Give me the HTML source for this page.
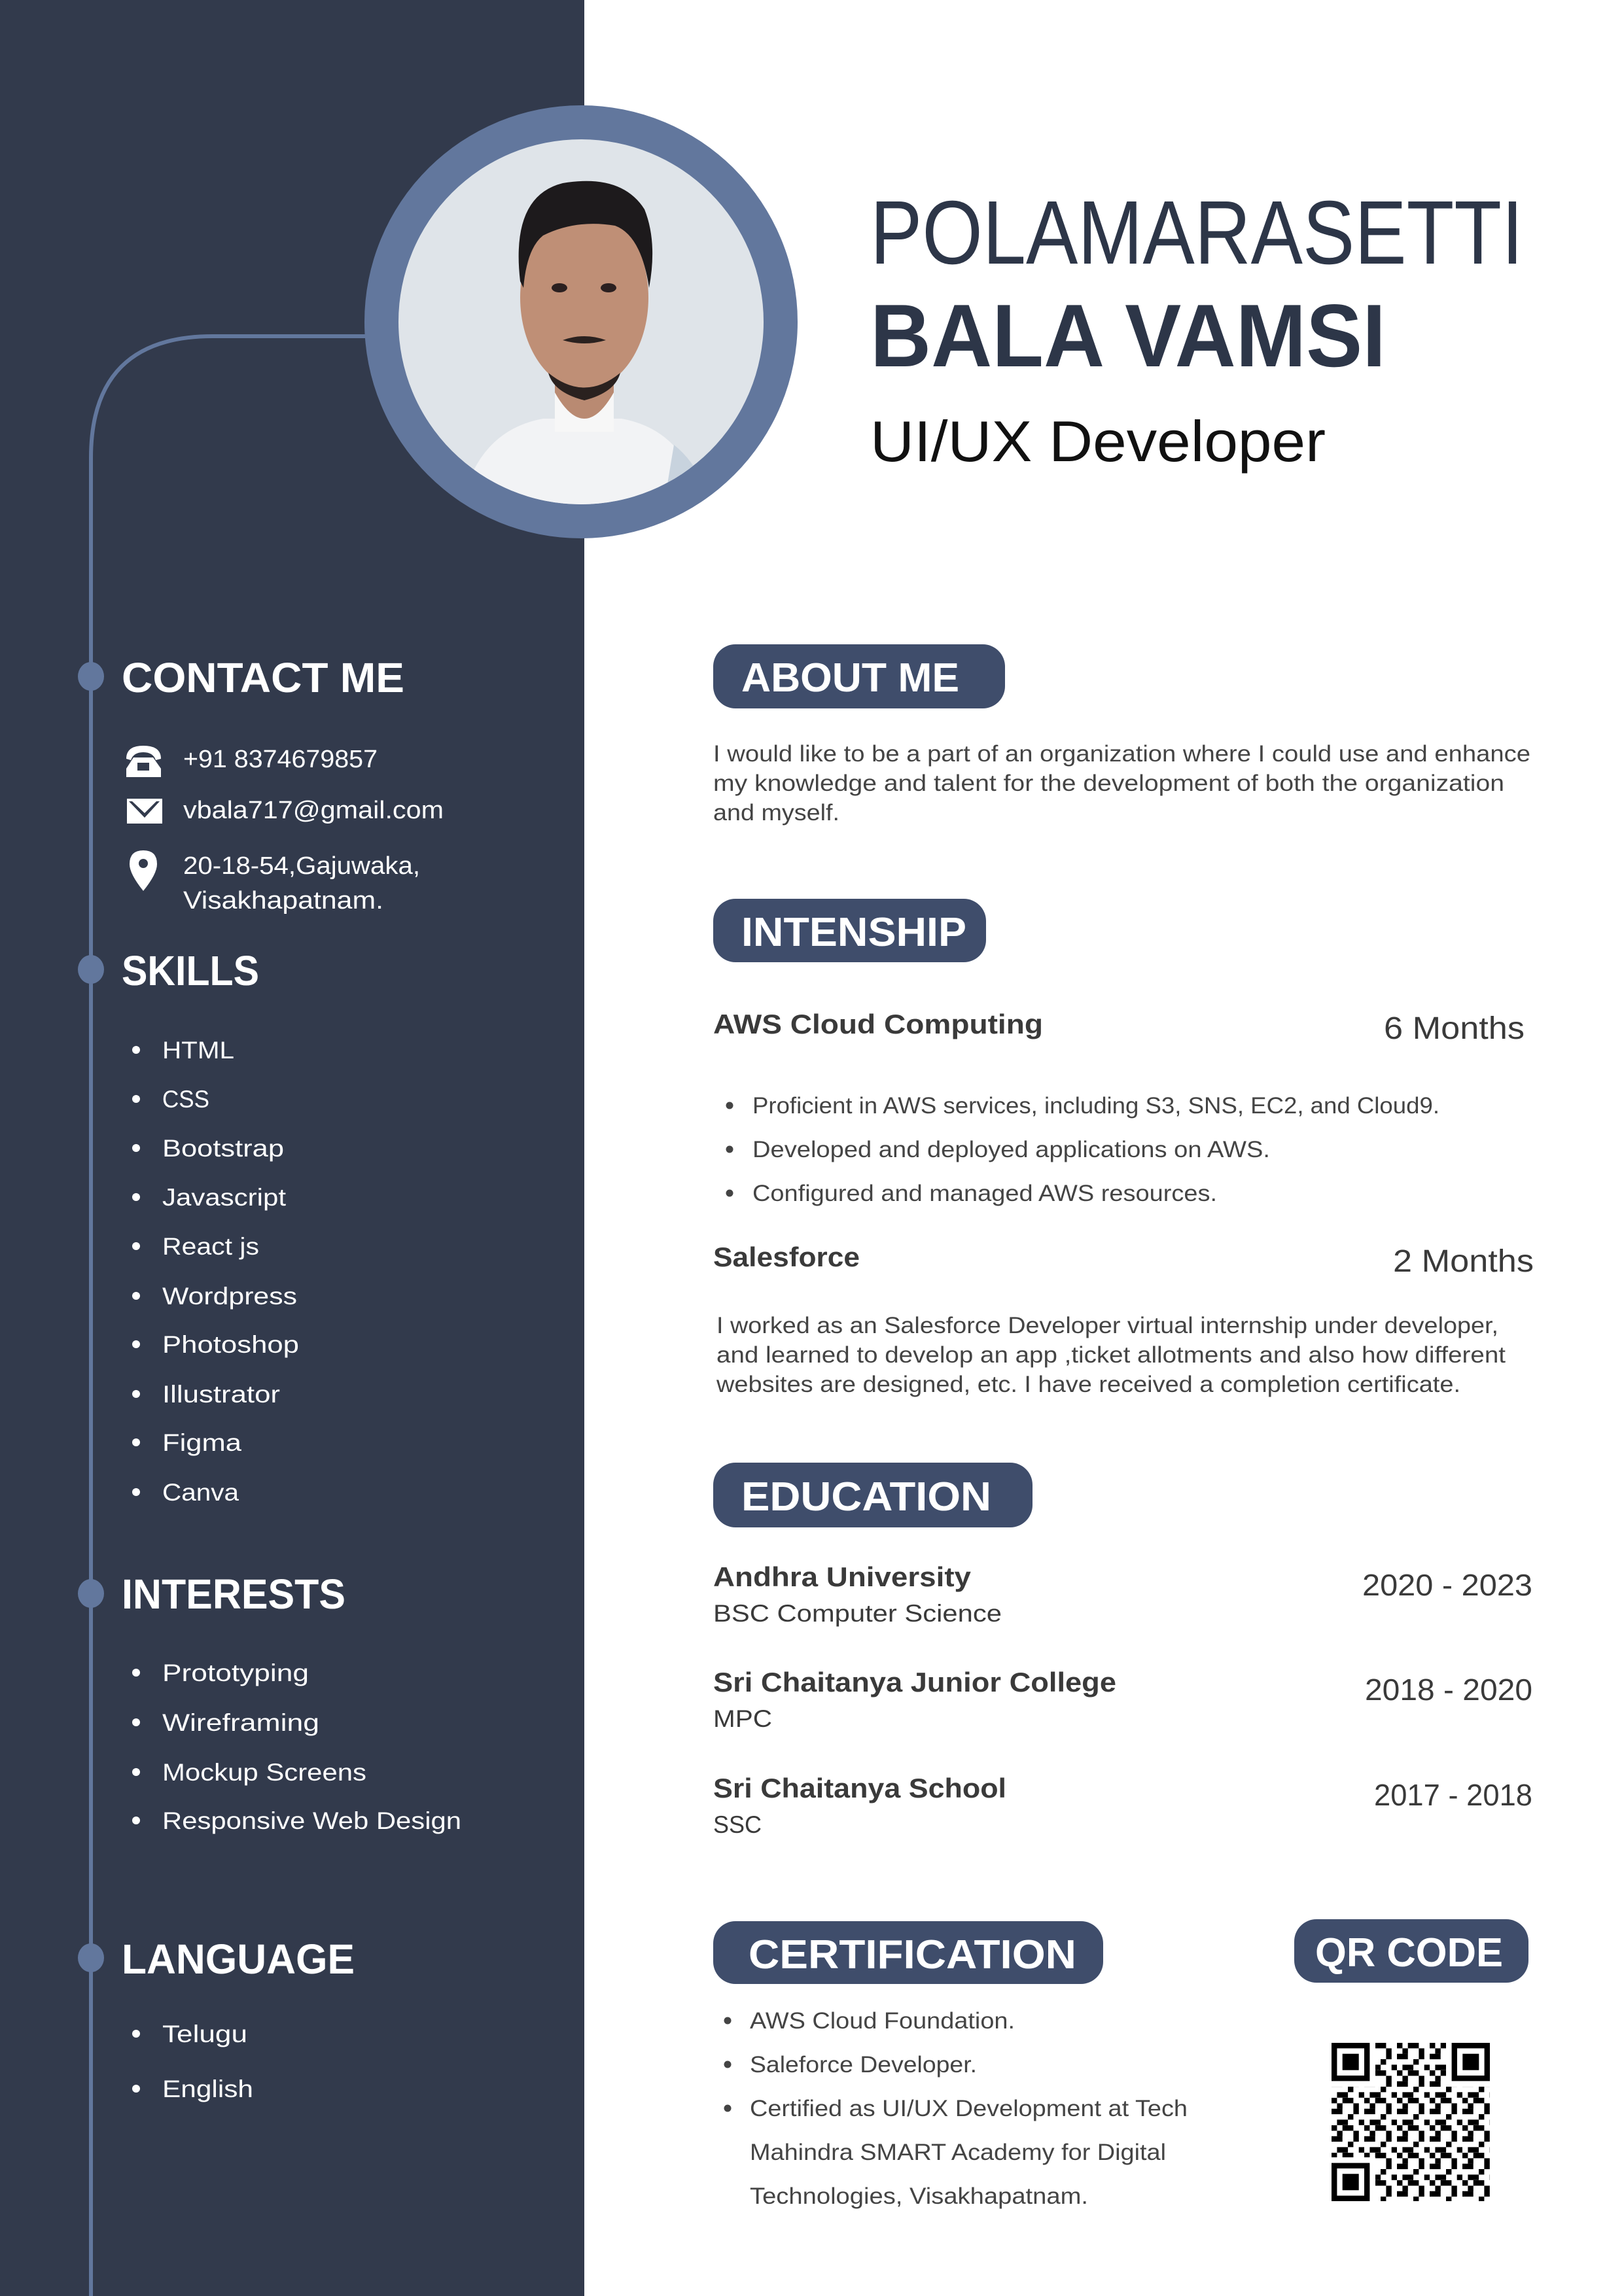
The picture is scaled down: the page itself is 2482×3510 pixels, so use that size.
<!DOCTYPE html>
<html><head><meta charset="utf-8">
<style>
html,body{margin:0;padding:0;background:#fff;}
svg{display:block;}
text{font-family:"Liberation Sans",sans-serif;}
</style></head>
<body>
<svg width="2482" height="3510" viewBox="0 0 2482 3510" xmlns="http://www.w3.org/2000/svg">
<defs>
<clipPath id="ph"><circle cx="888" cy="492" r="279"/></clipPath>
<pattern id="qrp" x="2035" y="3123" width="50" height="42" patternUnits="userSpaceOnUse">
<rect x="0" y="0" width="8.4" height="8.4" fill="#000"/><rect x="16.7" y="0" width="16.7" height="8.4" fill="#000"/>
<rect x="8.4" y="8.4" width="8.4" height="8.4" fill="#000"/><rect x="33.4" y="8.4" width="8.4" height="16.7" fill="#000"/>
<rect x="0" y="16.7" width="16.7" height="8.4" fill="#000"/><rect x="25" y="25" width="8.4" height="8.4" fill="#000"/>
<rect x="8.4" y="33.4" width="16.7" height="8.4" fill="#000"/><rect x="41.7" y="33.4" width="8.4" height="8.4" fill="#000"/>
</pattern>
</defs>
<rect width="2482" height="3510" fill="#fff"/>
<rect width="893" height="3510" fill="#323a4c"/>
<!-- timeline -->
<path d="M139 3510 V700 Q139 514 325 514 H570" fill="none" stroke="#62779d" stroke-width="6"/>
<g fill="#62779d">
<ellipse cx="139" cy="1034" rx="20" ry="22"/>
<ellipse cx="139" cy="1482" rx="20" ry="22"/>
<ellipse cx="139" cy="2436" rx="20" ry="22"/>
<ellipse cx="139" cy="2993" rx="20" ry="22"/>
</g>
<!-- photo -->
<circle cx="888" cy="492" r="331" fill="#62779d"/>
<circle cx="888" cy="492" r="279" fill="#dfe4e9"/>
<g clip-path="url(#ph)">
<path d="M700 800 Q720 660 830 640 L950 640 Q1060 660 1080 800 Z" fill="#f2f3f5"/>
<path d="M1030 680 Q1080 720 1090 800 L1010 800 Z" fill="#c8d3de"/>
<rect x="848" y="560" width="90" height="90" fill="#b98a72"/>
<path d="M848 600 Q893 680 938 600 L938 660 L848 660 Z" fill="#f7f7f7"/>
<ellipse cx="893" cy="455" rx="98" ry="140" fill="#bf8f76"/>
<path d="M795 430 Q780 300 860 280 Q950 265 985 320 Q1005 370 992 440 Q980 360 940 345 Q880 335 830 360 Q805 380 800 440 Z" fill="#1d1a1c"/>
<path d="M838 570 Q893 615 948 570 Q940 600 893 612 Q846 600 838 570 Z" fill="#2a211f"/>
<path d="M860 520 Q893 508 926 520 Q893 530 860 520 Z" fill="#2a211f"/>
<ellipse cx="855" cy="440" rx="12" ry="7" fill="#2b2020"/>
<ellipse cx="930" cy="440" rx="12" ry="7" fill="#2b2020"/>
</g>
<!-- name -->
<text x="1330" y="403" font-size="138" fill="#2d3648" textLength="998" lengthAdjust="spacingAndGlyphs">POLAMARASETTI</text>
<text x="1330" y="560" font-size="136" font-weight="bold" fill="#2d3648" textLength="788" lengthAdjust="spacingAndGlyphs">BALA VAMSI</text>
<text x="1330" y="705" font-size="88" fill="#111" textLength="696" lengthAdjust="spacingAndGlyphs">UI/UX Developer</text>
<!-- sidebar headings -->
<g fill="#fff" font-weight="bold" font-size="64">
<text x="186" y="1058" textLength="432" lengthAdjust="spacingAndGlyphs">CONTACT ME</text>
<text x="186" y="1506" textLength="210" lengthAdjust="spacingAndGlyphs">SKILLS</text>
<text x="186" y="2459" textLength="342" lengthAdjust="spacingAndGlyphs">INTERESTS</text>
<text x="186" y="3017" textLength="356" lengthAdjust="spacingAndGlyphs">LANGUAGE</text>
</g>
<!-- contact icons -->
<g fill="#fff">
<path d="M193 1160 Q193 1140 219 1140 Q246 1140 246 1160 L238 1162 Q234 1150 219 1150 Q204 1150 200 1162 Z"/>
<path d="M204 1158 L234 1158 L246 1175 L246 1188 L193 1188 L193 1175 Z"/>
<rect x="194" y="1221" width="54" height="38"/>
<path d="M219 1300 Q198 1300 198 1321 Q198 1336 219 1362 Q240 1336 240 1321 Q240 1300 219 1300 Z"/>
</g>
<g fill="#323a4c">
<rect x="210" y="1166" width="18" height="12"/>
<path d="M197 1225 L221 1250 L244 1225 L239 1225 L221 1243 L202 1225 Z"/>
<circle cx="219" cy="1320" r="7"/>
</g>
<g fill="#fff" font-size="38">
<text x="280" y="1173" textLength="297" lengthAdjust="spacingAndGlyphs">+91 8374679857</text>
<text x="280" y="1251" textLength="398" lengthAdjust="spacingAndGlyphs">vbala717@gmail.com</text>
<text x="280" y="1336" textLength="362" lengthAdjust="spacingAndGlyphs">20-18-54,Gajuwaka,</text>
<text x="280" y="1389" textLength="306" lengthAdjust="spacingAndGlyphs">Visakhapatnam.</text>
</g>
<!-- skills -->
<g fill="#fff" font-size="37">
<g>
<circle cx="208" cy="1605" r="6"/><text x="248" y="1618" textLength="110" lengthAdjust="spacingAndGlyphs">HTML</text>
<circle cx="208" cy="1680" r="6"/><text x="248" y="1693" textLength="72" lengthAdjust="spacingAndGlyphs">CSS</text>
<circle cx="208" cy="1755" r="6"/><text x="248" y="1768" textLength="186" lengthAdjust="spacingAndGlyphs">Bootstrap</text>
<circle cx="208" cy="1830" r="6"/><text x="248" y="1843" textLength="189" lengthAdjust="spacingAndGlyphs">Javascript</text>
<circle cx="208" cy="1905" r="6"/><text x="248" y="1918" textLength="148" lengthAdjust="spacingAndGlyphs">React js</text>
<circle cx="208" cy="1981" r="6"/><text x="248" y="1994" textLength="206" lengthAdjust="spacingAndGlyphs">Wordpress</text>
<circle cx="208" cy="2055" r="6"/><text x="248" y="2068" textLength="209" lengthAdjust="spacingAndGlyphs">Photoshop</text>
<circle cx="208" cy="2131" r="6"/><text x="248" y="2144" textLength="180" lengthAdjust="spacingAndGlyphs">Illustrator</text>
<circle cx="208" cy="2205" r="6"/><text x="248" y="2218" textLength="121" lengthAdjust="spacingAndGlyphs">Figma</text>
<circle cx="208" cy="2281" r="6"/><text x="248" y="2294" textLength="117" lengthAdjust="spacingAndGlyphs">Canva</text>
</g>
<circle cx="208" cy="2557" r="6"/><text x="248" y="2570" textLength="224" lengthAdjust="spacingAndGlyphs">Prototyping</text>
<circle cx="208" cy="2633" r="6"/><text x="248" y="2646" textLength="240" lengthAdjust="spacingAndGlyphs">Wireframing</text>
<circle cx="208" cy="2709" r="6"/><text x="248" y="2722" textLength="312" lengthAdjust="spacingAndGlyphs">Mockup Screens</text>
<circle cx="208" cy="2783" r="6"/><text x="248" y="2796" textLength="457" lengthAdjust="spacingAndGlyphs">Responsive Web Design</text>
<circle cx="208" cy="3109" r="6"/><text x="248" y="3122" textLength="130" lengthAdjust="spacingAndGlyphs">Telugu</text>
<circle cx="208" cy="3193" r="6"/><text x="248" y="3206" textLength="139" lengthAdjust="spacingAndGlyphs">English</text>
</g>
<!-- pills -->
<g fill="#3f4d6b">
<rect x="1090" y="985" width="446" height="98" rx="34"/>
<rect x="1090" y="1374" width="417" height="97" rx="34"/>
<rect x="1090" y="2236" width="488" height="99" rx="34"/>
<rect x="1090" y="2937" width="596" height="96" rx="34"/>
<rect x="1978" y="2934" width="358" height="97" rx="34"/>
</g>
<g fill="#fff" font-weight="bold" font-size="62">
<text x="1133" y="1057" textLength="333" lengthAdjust="spacingAndGlyphs">ABOUT ME</text>
<text x="1133" y="1446" textLength="344" lengthAdjust="spacingAndGlyphs">INTENSHIP</text>
<text x="1133" y="2309" textLength="382" lengthAdjust="spacingAndGlyphs">EDUCATION</text>
<text x="1144" y="3009" textLength="501" lengthAdjust="spacingAndGlyphs">CERTIFICATION</text>
<text x="2010" y="3006" textLength="287" lengthAdjust="spacingAndGlyphs">QR CODE</text>
</g>
<!-- about -->
<g fill="#444" font-size="35">
<text x="1090" y="1164" textLength="1249" lengthAdjust="spacingAndGlyphs">I would like to be a part of an organization where I could use and enhance</text>
<text x="1090" y="1209" textLength="1209" lengthAdjust="spacingAndGlyphs">my knowledge and talent for the development of both the organization</text>
<text x="1090" y="1254" textLength="193" lengthAdjust="spacingAndGlyphs">and myself.</text>
</g>
<!-- internship -->
<g fill="#3a3a3a">
<text x="1090" y="1580" font-size="42" font-weight="bold" textLength="504" lengthAdjust="spacingAndGlyphs">AWS Cloud Computing</text>
<text x="2115" y="1588" font-size="48" textLength="215" lengthAdjust="spacingAndGlyphs">6 Months</text>
<text x="1090" y="1936" font-size="42" font-weight="bold" textLength="224" lengthAdjust="spacingAndGlyphs">Salesforce</text>
<text x="2129" y="1944" font-size="48" textLength="215" lengthAdjust="spacingAndGlyphs">2 Months</text>
</g>
<g fill="#444" font-size="35">
<circle cx="1115" cy="1690" r="5.5"/><text x="1150" y="1702" textLength="1050" lengthAdjust="spacingAndGlyphs">Proficient in AWS services, including S3, SNS, EC2, and Cloud9.</text>
<circle cx="1115" cy="1757" r="5.5"/><text x="1150" y="1769" textLength="791" lengthAdjust="spacingAndGlyphs">Developed and deployed applications on AWS.</text>
<circle cx="1115" cy="1824" r="5.5"/><text x="1150" y="1836" textLength="710" lengthAdjust="spacingAndGlyphs">Configured and managed AWS resources.</text>
<text x="1095" y="2038" textLength="1195" lengthAdjust="spacingAndGlyphs">I worked as an Salesforce Developer virtual internship under developer,</text>
<text x="1095" y="2083" textLength="1206" lengthAdjust="spacingAndGlyphs">and learned to develop an app ,ticket allotments and also how different</text>
<text x="1095" y="2128" textLength="1137" lengthAdjust="spacingAndGlyphs">websites are designed, etc. I have received a completion certificate.</text>
</g>
<!-- education -->
<g fill="#3a3a3a">
<g font-size="42" font-weight="bold">
<text x="1090" y="2425" textLength="394" lengthAdjust="spacingAndGlyphs">Andhra University</text>
<text x="1090" y="2586" textLength="616" lengthAdjust="spacingAndGlyphs">Sri Chaitanya Junior College</text>
<text x="1090" y="2748" textLength="448" lengthAdjust="spacingAndGlyphs">Sri Chaitanya School</text>
</g>
<g font-size="37">
<text x="1090" y="2479" textLength="441" lengthAdjust="spacingAndGlyphs">BSC Computer Science</text>
<text x="1090" y="2640" textLength="90" lengthAdjust="spacingAndGlyphs">MPC</text>
<text x="1090" y="2802" textLength="74" lengthAdjust="spacingAndGlyphs">SSC</text>
</g>
<g font-size="46">
<text x="2082" y="2439" textLength="260" lengthAdjust="spacingAndGlyphs">2020 - 2023</text>
<text x="2086" y="2599" textLength="256" lengthAdjust="spacingAndGlyphs">2018 - 2020</text>
<text x="2100" y="2760" textLength="242" lengthAdjust="spacingAndGlyphs">2017 - 2018</text>
</g>
</g>
<!-- certification -->
<g fill="#444" font-size="35">
<circle cx="1112" cy="3089" r="5.5"/><text x="1146" y="3101" textLength="405" lengthAdjust="spacingAndGlyphs">AWS Cloud Foundation.</text>
<circle cx="1112" cy="3156" r="5.5"/><text x="1146" y="3168" textLength="347" lengthAdjust="spacingAndGlyphs">Saleforce Developer.</text>
<circle cx="1112" cy="3223" r="5.5"/><text x="1146" y="3235" textLength="669" lengthAdjust="spacingAndGlyphs">Certified as UI/UX Development at Tech</text>
<text x="1146" y="3302" textLength="636" lengthAdjust="spacingAndGlyphs">Mahindra SMART Academy for Digital</text>
<text x="1146" y="3369" textLength="517" lengthAdjust="spacingAndGlyphs">Technologies, Visakhapatnam.</text>
</g>
<!-- QR -->
<rect x="2035" y="3123" width="242" height="242" fill="url(#qrp)"/>
<g>
<rect x="2030" y="3118" width="72" height="72" fill="#fff"/>
<rect x="2210" y="3118" width="72" height="72" fill="#fff"/>
<rect x="2030" y="3298" width="72" height="72" fill="#fff"/>
<g fill="none" stroke="#000" stroke-width="8.4">
<rect x="2039.2" y="3127.2" width="50" height="50"/>
<rect x="2222.8" y="3127.2" width="50" height="50"/>
<rect x="2039.2" y="3310.8" width="50" height="50"/>
</g>
<rect x="2051.7" y="3139.7" width="25" height="25" fill="#000"/>
<rect x="2235.3" y="3139.7" width="25" height="25" fill="#000"/>
<rect x="2051.7" y="3323.3" width="25" height="25" fill="#000"/>
</g>
</svg>
</body></html>
